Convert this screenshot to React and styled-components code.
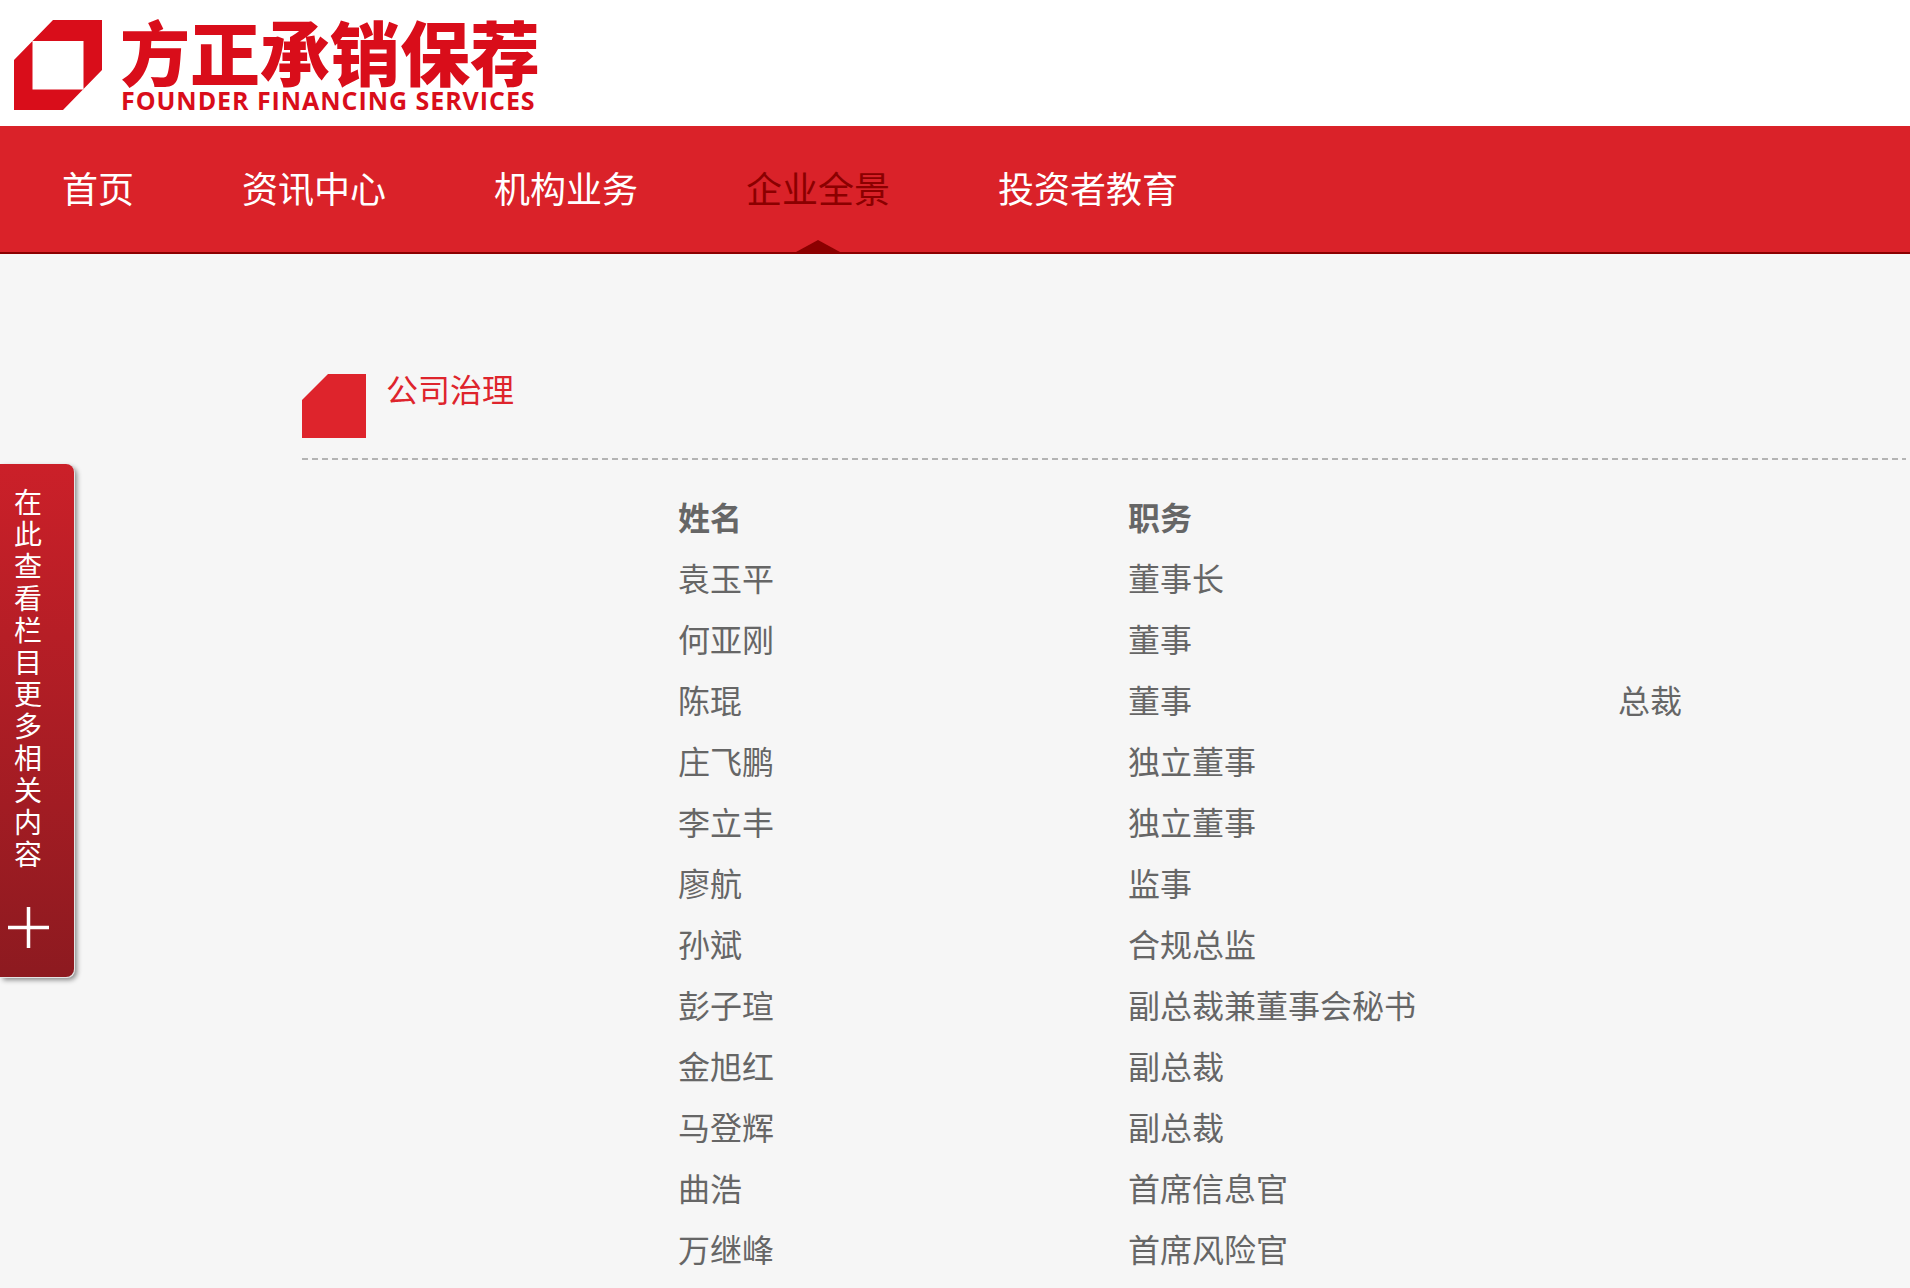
import React from 'react';
import styled, { createGlobalStyle } from 'styled-components';

const GlobalStyle = createGlobalStyle`
  html, body {
    margin: 0;
    padding: 0;
    height: 100%;
    overflow: hidden;
    background: #f6f6f6;
    font-family: "Noto Sans CJK SC", "Liberation Sans", sans-serif;
  }
`;

const NAV_ITEMS = [
  { label: '首页' },
  { label: '资讯中心' },
  { label: '机构业务' },
  { label: '企业全景', active: true },
  { label: '投资者教育' },
];

const PEOPLE = [
  ['袁玉平', '董事长'],
  ['何亚刚', '董事'],
  ['陈琨', '董事', '总裁'],
  ['庄飞鹏', '独立董事'],
  ['李立丰', '独立董事'],
  ['廖航', '监事'],
  ['孙斌', '合规总监'],
  ['彭子瑄', '副总裁兼董事会秘书'],
  ['金旭红', '副总裁'],
  ['马登辉', '副总裁'],
  ['曲浩', '首席信息官'],
  ['万继峰', '首席风险官'],
];

const Page = styled.div`
  position: relative;
  height: 1288px;
  overflow: hidden;
`;

const Header = styled.header`
  height: 126px;
  background: #fff;
  display: flex;
  align-items: flex-start;
  padding: 20px 0 0 14px;
  box-sizing: border-box;
`;

const LogoMark = styled.svg`
  width: 88px;
  height: 90px;
  flex: none;
`;

const LogoText = styled.div`
  margin-left: 18px;
  width: 420px;
  color: #d90d1a;
`;

const LogoTitle = styled.div`
  font-size: 70px;
  line-height: 62px;
  font-weight: 900;
  white-space: nowrap;
`;

const LogoSub = styled.div`
  margin-top: 7px;
  padding-left: 1px;
  font-family: "Open Sans", "Liberation Sans", sans-serif;
  font-size: 25px;
  line-height: 22px;
  font-weight: 700;
  white-space: nowrap;
  letter-spacing: 0.95px;
`;

const Nav = styled.nav`
  height: 128px;
  background: #da2229;
  border-bottom: 2px solid #8b0000;
  box-sizing: border-box;
  display: flex;
  padding-left: 8px;
`;

const NavItem = styled.a`
  position: relative;
  padding: 0 54px;
  font-size: 36px;
  line-height: 122px;
  color: ${p => (p.$active ? '#8b0000' : '#fff')};

  ${p => p.$active && `
    &::after {
      content: '';
      position: absolute;
      left: 50%;
      bottom: 0;
      margin-left: -22px;
      border-left: 22px solid transparent;
      border-right: 22px solid transparent;
      border-bottom: 12px solid #8b0000;
    }
  `}
`;

const Main = styled.main`
  padding: 120px 4px 0 302px;
`;

const SectionHead = styled.div`
  display: flex;
  gap: 20px;
  height: 84px;
`;

const Divider = styled.div`
  height: 2px;
  background: repeating-linear-gradient(90deg, #b4b4b4 0 6px, transparent 6px 10px);
`;

const SectionIcon = styled.div`
  width: 64px;
  height: 64px;
  background: #de242c;
  clip-path: polygon(26px 0, 100% 0, 100% 100%, 0 100%, 0 26px);
`;

const SectionTitle = styled.h2`
  margin: 0;
  font-size: 32px;
  font-weight: 400;
  line-height: 28px;
  color: #de242c;
`;

const Table = styled.table`
  margin: 25px 0 0 376px;
  border-collapse: collapse;
  table-layout: fixed;
  width: 1100px;
`;

const Th = styled.th`
  width: ${p => p.$width}px;
  height: 61px;
  padding: 0;
  font-size: 32px;
  font-weight: 700;
  text-align: left;
  color: #666;
`;

const Td = styled.td`
  height: 61px;
  padding: 0;
  font-size: 32px;
  color: #666;
`;

const SideTab = styled.aside`
  position: absolute;
  left: 0;
  top: 464px;
  width: 74px;
  height: 513px;
  box-sizing: border-box;
  padding: 21px 0 0 14px;
  border-radius: 0 8px 8px 0;
  background: linear-gradient(#cb2029, #8d1a20);
  box-shadow: 1px 1px 0 #e4e4e4, 3px 3px 5px rgba(0, 0, 0, 0.45);
  color: #fff;
`;

const SideText = styled.div`
  width: 28px;
  font-size: 28px;
  line-height: 32px;
`;

const SidePlus = styled.svg`
  position: absolute;
  left: 8px;
  bottom: 29px;
  width: 41px;
  height: 41px;
`;

export default function App() {
  return (
    <Page>
      <GlobalStyle />
      <Header>
        <LogoMark viewBox="0 0 88 90">
          <path
            fill="#d90d1a"
            fillRule="evenodd"
            d="M39 0H88V50L49 90H0V40ZM18.500 21V69.500H69.500V21Z"
          />
        </LogoMark>
        <LogoText>
          <LogoTitle>方正承销保荐</LogoTitle>
          <LogoSub>FOUNDER FINANCING SERVICES</LogoSub>
        </LogoText>
      </Header>
      <Nav>
        {NAV_ITEMS.map(item => (
          <NavItem key={item.label} $active={item.active}>{item.label}</NavItem>
        ))}
      </Nav>
      <Main>
        <SectionHead>
          <SectionIcon />
          <SectionTitle>公司治理</SectionTitle>
        </SectionHead>
        <Divider />
        <Table>
          <thead>
            <tr>
              <Th $width={450}>姓名</Th>
              <Th $width={490}>职务</Th>
              <Th $width={160} />
            </tr>
          </thead>
          <tbody>
            {PEOPLE.map(([name, role, extra]) => (
              <tr key={name}>
                <Td>{name}</Td>
                <Td>{role}</Td>
                <Td>{extra}</Td>
              </tr>
            ))}
          </tbody>
        </Table>
      </Main>
      <SideTab>
        <SideText>在此查看栏目更多相关内容</SideText>
        <SidePlus viewBox="0 0 41 41">
          <path d="M20.500 0V41M0 20.500H41" stroke="#fff" strokeWidth="3.500" fill="none" />
        </SidePlus>
      </SideTab>
    </Page>
  );
}
